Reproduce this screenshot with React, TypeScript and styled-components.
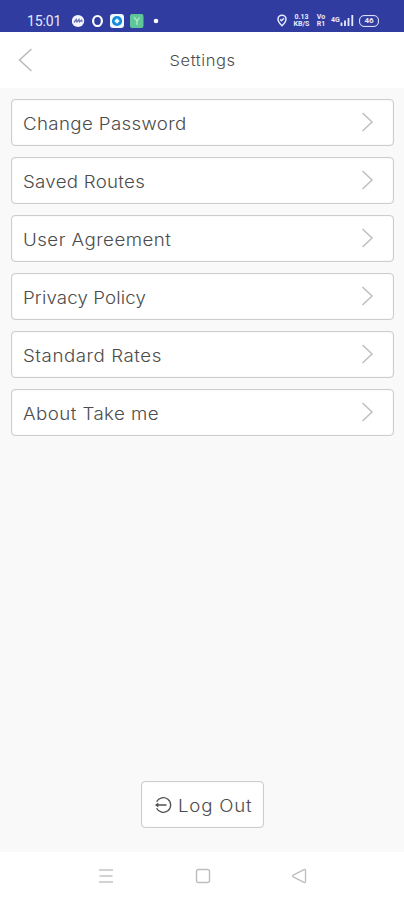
import React from "react";
import styled, { createGlobalStyle } from "styled-components";

const GlobalStyle = createGlobalStyle`
  *, *::before, *::after { box-sizing: border-box; }
  body { margin: 0; background: #f9f9f9; }
  button { font: inherit; color: inherit; }
`;

const Screen = styled.div`
  display: flex;
  flex-direction: column;
  width: 100%;
  height: 900px;
  overflow: hidden;
  background: #f9f9f9;
  color: #4c4c4c;
  font-family: Inter, "Open Sans", sans-serif;
  font-weight: 300;
`;

const StatusBar = styled.div`
  display: flex;
  flex: none;
  align-items: center;
  justify-content: space-between;
  height: 32px;
  padding: 9px 25px 0 27px;
  background: #303c9f;
  color: #e6eaff;
`;

const StatusGroup = styled.div<{ $gap: number }>`
  display: flex;
  align-items: center;
  gap: ${(p) => p.$gap}px;
  svg { display: block; }
`;

const Clock = styled.span`
  width: 36px;
  margin-right: 3px;
  font: 400 14px/18px Roboto, sans-serif;
  letter-spacing: -0.1px;
  white-space: nowrap;
`;

const TinyStack = styled.div<{ $width: number }>`
  display: flex;
  flex-direction: column;
  align-items: center;
  width: ${(p) => p.$width}px;
  font: 700 7px/7px Roboto, sans-serif;
  white-space: nowrap;
`;

const Header = styled.header`
  display: grid;
  flex: none;
  grid-template-columns: 52px 1fr 52px;
  align-items: center;
  height: 56px;
  background: #fff;
`;

const BackButton = styled.button`
  display: flex;
  align-items: center;
  height: 56px;
  padding: 0 0 0 18px;
  border: 0;
  background: none;
`;

const Title = styled.h1`
  margin: 0;
  padding: 2px 0 0 1px;
  text-align: center;
  color: #4c4c4c;
  font-size: 15px;
  font-weight: 300;
  line-height: 20px;
  letter-spacing: 0.5px;
  transform: scaleX(1.1);
`;

const Menu = styled.nav`
  display: flex;
  flex: 1;
  flex-direction: column;
  gap: 11px;
  padding: 11px 10px 0 11px;
`;

const OutlinedButton = styled.button`
  display: flex;
  align-items: center;
  height: 47px;
  border: 1px solid #cdcdcd;
  border-radius: 4px;
  background: #fff;
  box-shadow: inset 0 0 1px #c8c8c8;
  svg { display: block; }
`;

const MenuRow = styled(OutlinedButton)`
  justify-content: space-between;
  padding: 2px 19px 0 11px;
  svg { margin-top: -3px; }
`;

const Label = styled.span<{ $tracking: number }>`
  font-size: 17px;
  line-height: 24px;
  letter-spacing: ${(p) => p.$tracking}px;
  white-space: nowrap;
  transform: scaleX(1.1);
  transform-origin: left center;
`;

const Footer = styled.div`
  display: flex;
  flex: none;
  justify-content: center;
  padding-bottom: 24px;
`;

const LogOutButton = styled(OutlinedButton)`
  gap: 6px;
  width: 123px;
  padding: 2px 0 0 12px;
  svg { margin-top: -2px; }
`;

const NavigationBar = styled.div`
  display: flex;
  flex: none;
  align-items: center;
  justify-content: space-between;
  height: 48px;
  padding: 0 97px 0 98px;
  background: #fff;
`;

const items = [
  { label: "Change Password", tracking: 0.33 },
  { label: "Saved Routes", tracking: 0.25 },
  { label: "User Agreement", tracking: 0.42 },
  { label: "Privacy Policy", tracking: 0.12 },
  { label: "Standard Rates", tracking: 0.5 },
  { label: "About Take me", tracking: 0.4 },
];

const Chevron = () => (
  <svg width="14" height="22" viewBox="0 0 14 22" fill="none" stroke="#c0c0c0" strokeWidth="1.6">
    <path d="M2.5 2l9.5 9-9.5 9" />
  </svg>
);

const NotificationIcons = () => (
  <svg width="90" height="16" viewBox="0 0 90 16" fill="none">
    <ellipse cx="6" cy="8" rx="6.2" ry="6" fill="#f4f6ff" />
    <path d="M2 9.5l2.2-3L5 9l2-2.5.5 2.2L9.5 7l.7 2" stroke="#6674b5" strokeWidth="1.3" />
    <ellipse cx="25.5" cy="8" rx="4.4" ry="5" stroke="#fff" strokeWidth="2.2" />
    <rect x="38" y="1" width="14" height="14" rx="3" fill="#f1f9ff" />
    <circle cx="45" cy="8" r="5.1" fill="#168bdc" />
    <path d="M45 5.3l2.7 2.7-2.7 2.7L42.3 8z" fill="#e8f8ff" />
    <rect x="58" y="1" width="13.5" height="14" rx="2" fill="#5fc69a" />
    <path d="M62 4l3 4v4M65 8l2.5-3.5" stroke="#b9eed0" strokeWidth="1.2" />
    <circle cx="84" cy="8" r="2.3" fill="#fff" />
  </svg>
);

const PinIcon = () => (
  <svg width="10" height="13" viewBox="0 0 10 13" fill="none" stroke="currentColor" strokeWidth="1.5">
    <path d="M5 11.8C2.5 9.3 1 7.4 1 5.2a4 4 0 018 0c0 2.2-1.5 4.1-4 6.6z" />
    <path d="M3.2 5.4l1.3 1.3L7 4.2" />
  </svg>
);

const SignalIcon = () => (
  <svg width="14" height="13" viewBox="0 0 14 13" stroke="currentColor" strokeWidth="1.8">
    <path d="M1.5 8.5V12M5 6.5V12M8.5 4v8M12.3 1v11" />
  </svg>
);

const Battery = styled.span`
  display: flex;
  align-items: center;
  justify-content: center;
  width: 20px;
  height: 12px;
  border: 1.5px solid #d7ddfa;
  border-radius: 5px;
  box-shadow: inset 0 0 1px #d7ddfa;
  font: 700 8px/9px Roboto, sans-serif;
`;

export default function App() {
  return (
    <Screen>
      <GlobalStyle />
      <StatusBar>
        <StatusGroup $gap={6}>
          <Clock>15:01</Clock>
          <NotificationIcons />
        </StatusGroup>
        <StatusGroup $gap={5}>
          <PinIcon />
          <TinyStack $width={19}><span>0.13</span><span>KB/S</span></TinyStack>
          <TinyStack $width={10}><span>Vo</span><span>R1</span></TinyStack>
          <StatusGroup $gap={0}>
            <TinyStack $width={9}><span>4G</span></TinyStack>
            <SignalIcon />
          </StatusGroup>
          <Battery>46</Battery>
        </StatusGroup>
      </StatusBar>
      <Header>
        <BackButton aria-label="Back">
          <svg width="15" height="26" viewBox="0 0 15 26" fill="none" stroke="#bcbcbc" strokeWidth="1.6">
            <path d="M13.5 2L1.5 13l12 11" />
          </svg>
        </BackButton>
        <Title>Settings</Title>
      </Header>
      <Menu>
        {items.map((item) => (
          <MenuRow key={item.label}>
            <Label $tracking={item.tracking}>{item.label}</Label>
            <Chevron />
          </MenuRow>
        ))}
      </Menu>
      <Footer>
        <LogOutButton>
          <svg width="18" height="18" viewBox="0 0 18 18" fill="none" stroke="#505050" strokeWidth="1.3">
            <path d="M2.6 5.8a7.4 7.4 0 110 6.4M2 9h10.5" />
            <path d="M4.3 6.6L1 9l3.3 2.4z" fill="#505050" stroke="none" />
          </svg>
          <Label $tracking={0.7}>Log Out</Label>
        </LogOutButton>
      </Footer>
      <NavigationBar>
        <svg width="16" height="16" viewBox="0 0 16 16" stroke="#c4c4c4" strokeWidth="1.3">
          <path d="M1 2h14M1.5 8h13M1 14h14" />
        </svg>
        <svg width="16" height="16" viewBox="0 0 16 16" fill="none" stroke="#bdbdbd" strokeWidth="1.4">
          <rect x="1.5" y="1.5" width="13" height="13" rx="2" />
        </svg>
        <svg width="16" height="16" viewBox="0 0 16 16" fill="none" stroke="#bdbdbd" strokeWidth="1.3" strokeLinejoin="round">
          <path d="M14.5 2.5v11q0 1.5-1.5.8L2.2 8.8q-1.2-.8 0-1.6L13 1.7q1.5-.7 1.5.8z" />
        </svg>
      </NavigationBar>
    </Screen>
  );
}
